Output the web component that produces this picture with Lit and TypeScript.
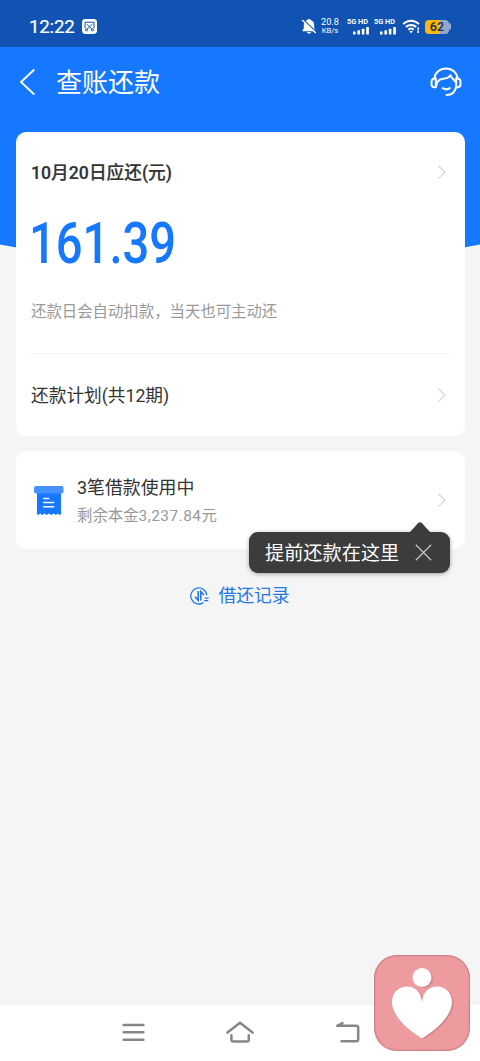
import { LitElement, html, css, svg } from "lit";
import { customElement } from "lit/decorators.js";

const chevron = html`<svg class="chev" width="10" height="16" viewBox="0 0 10 16" fill="none" stroke="#d8d8d8" stroke-width="1.3"><path d="M1.4 1.8 8 8.200 1.4 14.600" /></svg>`;

const signal = svg`<rect x="0" y="5.4" width="2.6" height="3.1" rx=".5"/><rect x="4.4" y="4.2" width="2.6" height="4.3" rx=".5"/><rect x="8.8" y="2.8" width="2.6" height="5.7" rx=".5"/><rect x="13.2" y="1" width="2.700" height="7.5" rx=".5"/>`;

@customElement("status-bar")
class StatusBar extends LitElement {
  static styles = css`
    :host { display: flex; align-items: center; height: 47px; box-sizing: border-box; padding: 6px 29px 0 29px; background: #1153b2; color: #fff; }
    svg { display: block; flex: none; }
    .time { font-size: 18.7px; line-height: 20px; width: 53px; font-weight: 400; -webkit-text-stroke: 0.2px #fff; letter-spacing: -0.2px; white-space: nowrap; }
    .right { display: flex; align-items: center; margin-left: auto; }
    .bell { margin-top: -1px; }
    .rate { width: 20px; margin: 0 7px 0 3px; font-size: 9.2px; line-height: 8.5px; text-align: center; white-space: nowrap; }
    .rate div + div { font-size: 7.6px; }
    .cell { width: 23px; margin-right: 4px; font-size: 7.4px; line-height: 8px; font-weight: 700; white-space: nowrap; }
    .cell svg { margin-left: 6px; }
    .wifi { margin-left: 1px; }
    .batt { display: flex; align-items: center; margin-left: 4px; }
    .level { width: 24px; height: 14px; border-radius: 4px; background: linear-gradient(90deg, #fab80c 62%, #8fa9d3 62%); color: #28333e; font-size: 12.5px; line-height: 14.5px; font-weight: 600; text-align: center; }
    .tip { width: 2px; height: 7px; border-radius: 0 2px 2px 0; background: #8fa9d3; }
  `;
  render() {
    return html`
      <div class="time">12:22</div>
      <svg width="15" height="15" viewBox="0 0 15 15"><rect width="15" height="15" rx="3.4" fill="#fff"/><g fill="none" stroke="#1153b2" stroke-width="1"><path d="M3 9V3.2h9V9M4.9 5.2l5 5M10.1 5.2l-5 5"/><circle cx="4.5" cy="10.8" r="1.1"/><circle cx="10.5" cy="10.8" r="1.1"/></g></svg>
      <div class="right">
        <svg class="bell" width="16" height="17" viewBox="0 0 16 17"><path d="M8 1c.9 0 1.4.5 1.5 1.100 2.400.7 3.700 2.500 3.700 4.700v3.600l1.400 2v.8H1.400v-.8l1.400-2V6.800c0-2.200 1.300-4 3.700-4.700C6.600 1.500 7.100 1 8 1ZM6 14h4c-.2 1-.9 1.600-2 1.600S6.200 15 6 14Z" fill="#fff"/><path d="M1.800 1.400 15.400 14.400" stroke="#1153b2" stroke-width="1.500"/><path d="M1.200 2 14.800 15" stroke="#fff" stroke-width="1.300"/></svg>
        <div class="rate"><div>20.8</div><div>KB/s</div></div>
        <div class="cell">5G HD<svg width="16" height="9" viewBox="0 0 16 9" fill="#fff">${signal}</svg></div>
        <div class="cell">5G HD<svg width="16" height="9" viewBox="0 0 16 9" fill="#fff">${signal}</svg></div>
        <svg class="wifi" width="19" height="15" viewBox="0 0 19 15" fill="none" stroke="#fff" stroke-width="2"><path d="M1.200 5.100c4.600-4.400 11.100-4.400 15.700 0M3.900 8c3-2.800 7.300-2.800 10.300 0M6.400 10.700c1.600-1.400 3.700-1.400 5.300 0"/><path d="M7.300 12.100h3.600L9.100 14.500Z" fill="#fff" stroke="none"/><path d="M16.200 8.500v2.300M16.200 11.600v2.400" stroke-width="1.600"/></svg>
        <div class="batt"><div class="level">62</div><div class="tip"></div></div>
      </div>`;
  }
}

@customElement("coach-tip")
class CoachTip extends LitElement {
  static styles = css`
    :host { display: block; position: absolute; z-index: 2; right: 15px; top: 71px; width: 201px; }
    .arrow { display: block; margin-left: 161px; }
    .box { display: flex; align-items: center; height: 41px; box-sizing: border-box; padding: 0 18px 0 16px; border-radius: 9px; background: #3c3c3c; color: #fff; box-shadow: 0 1px 4px rgba(0, 0, 0, 0.35); font-size: 19.2px; white-space: nowrap; }
    .box span { padding-bottom: 2px; }
    .x { margin-left: auto; }
  `;
  render() {
    return html`
      <svg class="arrow" width="20" height="10" viewBox="0 0 20 10"><path d="M0 10 8 1.200q2-2 4 0L20 10Z" fill="#3c3c3c"/></svg>
      <div class="box"><span>提前还款在这里</span><svg class="x" width="17" height="17" viewBox="0 0 17 17" stroke="#c4c4c4" stroke-width="1.300"><path d="M.8.8 16.200 16.200M16.200.8.8 16.200"/></svg></div>`;
  }
}

@customElement("app-root")
class AppRoot extends LitElement {
  static styles = css`
    :host { display: flex; flex-direction: column; position: relative; width: 480px; height: 1061px; overflow: hidden; background: #f5f5f5; color: #333; font-family: Roboto, "Noto Sans CJK SC", sans-serif; }
    svg { display: block; flex: none; }
    .head { display: flex; align-items: center; height: 85px; box-sizing: border-box; padding: 0 18px 15px 19px; background: #1677ff; color: #fff; }
    .title { margin-left: 20px; padding-top: 2px; font-size: 26px; line-height: 36px; flex: 1; }
    .hero { margin-bottom: -140px; }
    .card { position: relative; z-index: 1; margin: 0 15px 0 16px; border-radius: 10px; background: #fff; box-sizing: border-box; padding: 0 15px; }
    .bill { height: 304px; }
    .row { display: flex; align-items: center; justify-content: space-between; white-space: nowrap; }
    .row span { padding-bottom: 2px; }
    .chev { margin-right: 3px; }
    .due { height: 80px; font-size: 17.7px; font-weight: 500; }
    .due span { -webkit-text-stroke: 0.2px #333; }
    .amount { height: 66px; font-size: 57.5px; line-height: 64px; font-weight: 500; color: #1677ff; transform: scaleX(0.82); transform-origin: 0 50%; margin-left: -2px; white-space: nowrap; }
    .note { height: 76px; box-sizing: border-box; padding-top: 22px; font-size: 15.4px; line-height: 24px; color: #999; border-bottom: 1px solid #f5f5f5; white-space: nowrap; }
    .plan { height: 82px; font-size: 17.7px; }
    .loans { height: 98px; margin-top: 15px; z-index: 2; display: flex; align-items: center; }
    .receipt { margin-top: 2px; }
    .info { margin-left: 13px; padding-top: 3px; flex: 1; white-space: nowrap; }
    .count { font-size: 17.9px; line-height: 28px; }
    .rest { font-size: 15.4px; line-height: 28px; color: #999; }
    .num { letter-spacing: 0.48px; }
    .log { display: flex; align-items: center; justify-content: center; gap: 9px; margin-top: 30px; height: 30px; font-size: 17.8px; color: #2578e6; }
    .log svg { margin-top: 3px; }
    .nav { display: flex; align-items: center; height: 56px; box-sizing: border-box; padding-bottom: 2px; margin-top: auto; padding-left: 121px; gap: 81px; background: #fff; }
    .badge { position: absolute; z-index: 3; left: 374px; top: 955px; width: 96px; height: 96px; box-sizing: border-box; border-radius: 23px; background: #ee9ba0; box-shadow: inset 0 0 2px 0.5px rgba(130, 75, 82, 0.6); }
  `;
  render() {
    return html`
      <status-bar></status-bar>
      <div class="head">
        <svg width="17" height="28" viewBox="0 0 17 28" fill="none" stroke="#fff" stroke-width="1.900"><path d="M15.300 1.500 2 14l13.300 12.500"/></svg>
        <div class="title">查账还款</div>
        <svg width="32" height="30" viewBox="0 0 32 30" fill="none" stroke="#fff" stroke-width="2" stroke-linecap="round" stroke-linejoin="round"><path d="M4.400 11.500C5 5.500 9.800 1.500 16 1.500s11 4 11.600 10M5.800 11.300v8.900H4.500C2.500 20.200 1.500 19 1.500 17.300v-2.400c0-2 1.200-3.600 4.300-3.600M26.200 11.300v8.900h1.300c2 0 3-1.200 3-2.900v-2.400c0-2-1.200-3.600-4.300-3.600M6.400 18.500c0-4 3.400-6.400 6.600-6.700 3.600-.4 6-.8 7.400-3.600 1 3 4 4.600 5.600 7.300M26.100 20c-1 5-4.600 8-9.600 8M12.600 21.200c2.200 1.300 5.400 1.300 7.200-.1"/></svg>
      </div>
      <svg class="hero" width="480" height="140" viewBox="0 0 480 140"><path d="M0 0h480v112.500Q240 160 0 112.500Z" fill="#1677ff"/></svg>
      <div class="card bill">
        <div class="row due"><span>10月20日应还(元)</span>${chevron}</div>
        <div class="amount">161.39</div>
        <div class="note">还款日会自动扣款，当天也可主动还</div>
        <div class="row plan"><span>还款计划(共12期)</span>${chevron}</div>
      </div>
      <div class="card loans">
        <svg class="receipt" width="33" height="30" viewBox="0 0 33 30"><path d="M6 4h24v24.200l-1.300.8-1.800-1.500-2 1.500-2.300-1.500-2.300 1.500-2.300-1.500-2.300 1.500-2.300-1.500-2.300 1.500-2-1.500L7.300 29 6 28.200Z" fill="#1677ff"/><rect x="3" y="0" width="29.500" height="7.500" rx="2" fill="#4791ff"/><path d="M12.700 12.500h5M12.700 16.500h10M12.700 20.700h10" stroke="#fff" stroke-width="1.500" stroke-linecap="round"/></svg>
        <div class="info">
          <div class="count">3笔借款使用中</div>
          <div class="rest">剩余本金<span class="num">3,237.84</span>元</div>
        </div>
        ${chevron}
        <coach-tip></coach-tip>
      </div>
      <div class="log">
        <svg width="19" height="18" viewBox="0 0 19 18" fill="none" stroke="#2578e6" stroke-width="1.300"><path d="M16.800 8.300A8 8 0 1 0 13.300 15.600"/><path d="M8.200 4v9.200L5 9.800M10.800 13.500V4.600L14 8" stroke-width="1.600"/><path d="M14.700 11.200h4M14 13.700h4.300"/></svg>
        <span>借还记录</span>
      </div>
      <div class="nav">
        <svg width="24" height="20" viewBox="0 0 24 20" stroke="#878787" stroke-width="2.500" stroke-linecap="round"><path d="M2.600 3h19.800M2.600 10.300h19.800M2.600 17.700h19.800"/></svg>
        <svg width="28" height="22" viewBox="0 0 28 22" fill="none" stroke="#878787" stroke-width="2.500" stroke-linecap="round" stroke-linejoin="round"><path d="M1.500 11.600 14 1.700l12.500 9.900M5.400 14.200v4.300q0 2 2 2h13.400q2 0 2-2v-4.300"/></svg>
        <svg width="25" height="22" viewBox="0 0 25 22" fill="none" stroke="#878787" stroke-width="2.500" stroke-linecap="round" stroke-linejoin="round"><path d="M7.500 2 2.200 4.800h19q2 0 2 2v11.400q0 2-2 2H6.500"/></svg>
      </div>
      <div class="badge"><svg width="96" height="96" viewBox="0 0 96 96" fill="#fff"><g fill="#8e5057" opacity=".3" transform="translate(1.500 1)"><circle cx="48" cy="22.500" r="9.500"/><path d="M48 47C49 37 55 31.500 63 31.500c9 0 15 7 15 15.500 0 14-16 28-30 36.500C34 75 18 61 18 47c0-8.500 6-15.500 15-15.500 8 0 14 5.500 15 15.500Z"/></g><circle cx="48" cy="22.500" r="9.500"/><path d="M48 47C49 37 55 31.500 63 31.500c9 0 15 7 15 15.500 0 14-16 28-30 36.500C34 75 18 61 18 47c0-8.500 6-15.500 15-15.500 8 0 14 5.500 15 15.500Z"/></svg></div>`;
  }
}
